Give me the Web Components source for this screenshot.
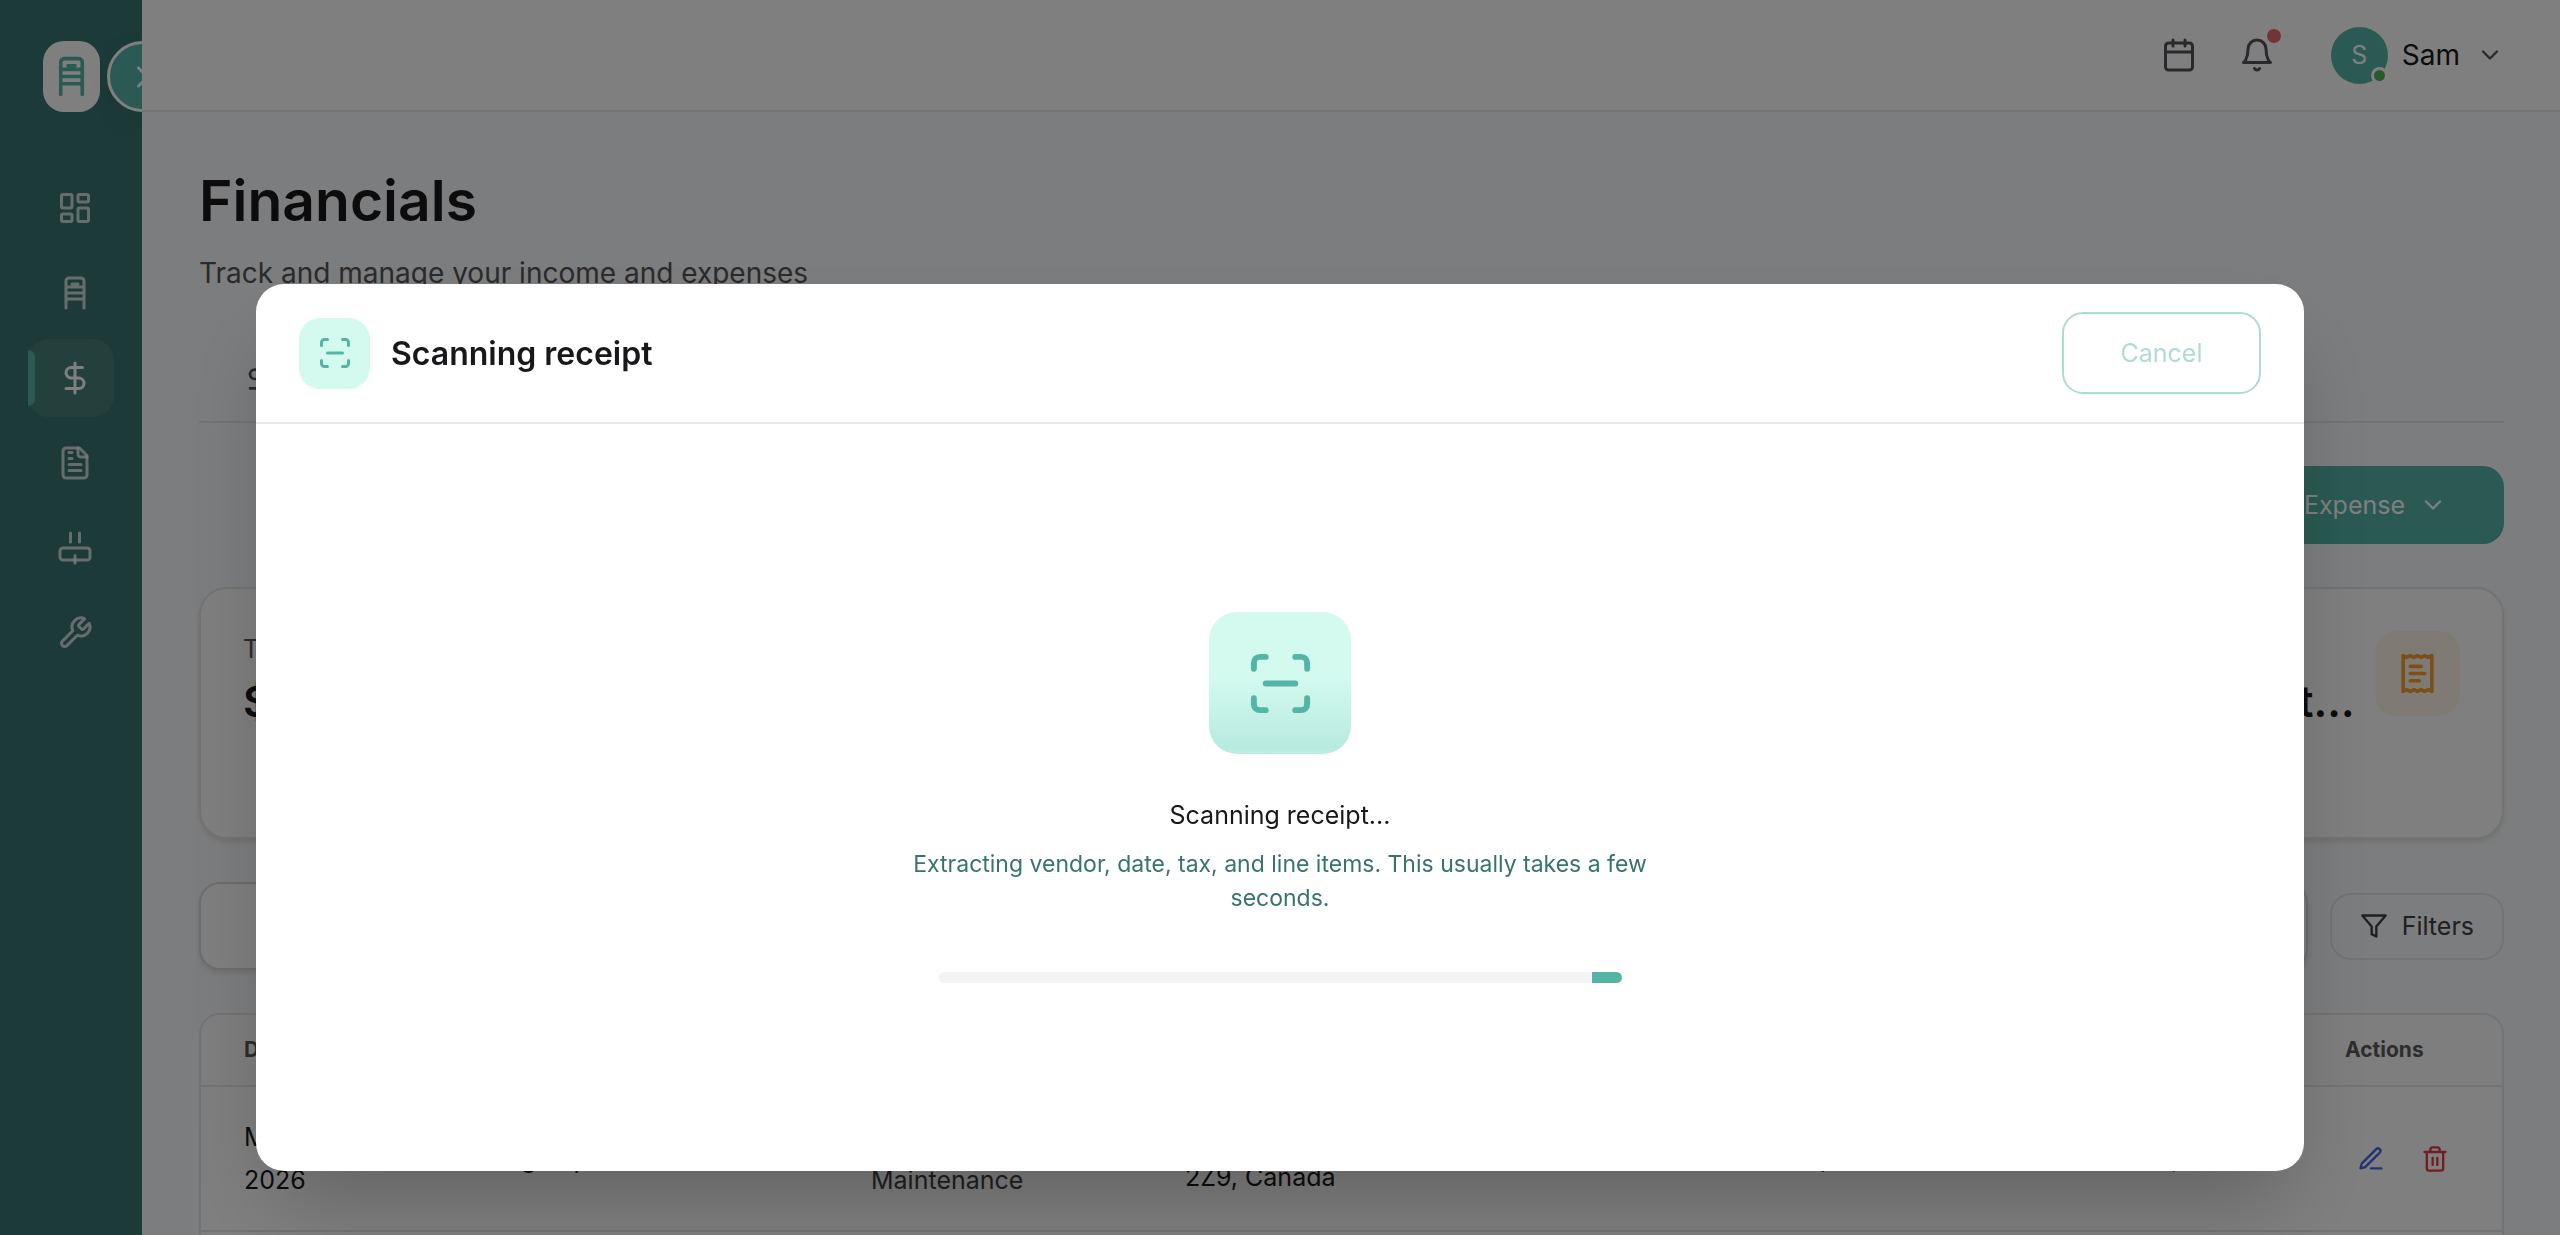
<!DOCTYPE html>
<html lang="en">
<head>
<meta charset="utf-8">
<title>Financials</title>
<style>
    html, body {
        margin: 0;
        height: 100%;
        overflow: hidden;
    }
    body {
        --teal: #54b5a6;
        --teal-dark: #38746e;
        --mint: #d4faf0;
        --line: #e5e7eb;
        --ink: #18181b;
        --muted: #555555;
        font-family: Inter, "Liberation Sans", sans-serif;
        font-size: 25px;
        line-height: 36px;
        color: var(--ink);
        background: #f9fafc;
    }
</style>
</head>
<body>
<finance-app></finance-app>
<scan-dialog heading="Scanning receipt">
    <span slot="status">Scanning receipt...</span>
    <span slot="hint">Extracting vendor, date, tax, and line items. This usually takes a few seconds.</span>
</scan-dialog>

<script>
(function () {
    const ICONS = {
        ladder: '<path d="M6 22V4a2 2 0 0 1 2-2h8a2 2 0 0 1 2 2v18M6 8h12M6 12h12M6 16h12M10 6h4"/>',
        dashboard: '<rect x="3" y="3" width="7" height="9" rx="1"/><rect x="14" y="3" width="7" height="5" rx="1"/><rect x="14" y="12" width="7" height="9" rx="1"/><rect x="3" y="16" width="7" height="5" rx="1"/>',
        dollar: '<path d="M12 2v20M17 5H9.5a3.5 3.5 0 0 0 0 7h5a3.5 3.5 0 0 1 0 7H6"/>',
        file: '<path d="M15 2H6a2 2 0 0 0-2 2v16a2 2 0 0 0 2 2h12a2 2 0 0 0 2-2V7Z"/><path d="M14 2v4a2 2 0 0 0 2 2h4M10 5H8M10 9H8M16 13H8M16 17H8"/>',
        appliance: '<rect x="2" y="12" width="20" height="8" rx="2"/><path d="M9 2v6M15 2v6M12 17v5"/>',
        wrench: '<path d="M14.7 6.3a1 1 0 0 0 0 1.4l1.6 1.6a1 1 0 0 0 1.4 0l3.77-3.77a6 6 0 0 1-7.94 7.94l-6.91 6.91a2.12 2.12 0 0 1-3-3l6.91-6.91a6 6 0 0 1 7.94-7.94l-3.76 3.76z"/>',
        right: '<path d="m9 18 6-6-6-6"/>',
        down: '<path d="m6 9 6 6 6-6"/>',
        calendar: '<rect x="3" y="4" width="18" height="18" rx="2"/><path d="M8 2v4M16 2v4M3 10h18"/>',
        bell: '<path d="M6 8a6 6 0 0 1 12 0c0 7 3 9 3 9H3s3-2 3-9M10.3 21a1.94 1.94 0 0 0 3.4 0"/>',
        receipt: '<path d="M4 2v20l2-1 2 1 2-1 2 1 2-1 2 1 2-1 2 1V2l-2 1-2-1-2 1-2-1-2 1-2-1-2 1Z"/><path d="M14 8H8M16 12H8M13 16H8"/>',
        filter: '<path d="M22 3H2l8 9.46V19l4 2v-8.54L22 3z"/>',
        pen: '<path d="M12 20h9M16.5 3.5a2.12 2.12 0 0 1 3 3L7 19l-4 1 1-4Z"/>',
        trash: '<path d="M3 6h18M19 6v14a2 2 0 0 1-2 2H7a2 2 0 0 1-2-2V6M8 6V4a2 2 0 0 1 2-2h4a2 2 0 0 1 2 2v2M10 11v6M14 11v6"/>',
        scan: '<path d="M3 7V5a2 2 0 0 1 2-2h2M17 3h2a2 2 0 0 1 2 2v2M21 17v2a2 2 0 0 1-2 2h-2M7 21H5a2 2 0 0 1-2-2v-2M7 12h10"/>'
    };

    // registers an element whose shadow root is filled from a template
    function define(name, render) {
        customElements.define(name, class extends HTMLElement {
            constructor() {
                super();
                this._shadowRoot = this.attachShadow({ mode: "open" });
            }
            connectedCallback() {
                const template = document.createElement("template");
                template.innerHTML = render(this);
                this._shadowRoot.replaceChildren(template.content.cloneNode(true));
            }
        });
    }

    define("ui-icon", (el) => {
        const size = el.getAttribute("size") || 36;
        return `
        <style>
            :host { display: block; flex: none; width: ${size}px; height: ${size}px; }
            svg { display: block; }
        </style>
        <svg width="${size}" height="${size}" viewBox="0 0 24 24" fill="none" stroke="currentColor"
            stroke-width="2" stroke-linecap="round" stroke-linejoin="round"
            aria-hidden="true">${ICONS[el.getAttribute("name")]}</svg>
        `;
    });

    define("nav-item", (el) => `
        <style>
            :host { display: block; }
            a {
                display: flex;
                align-items: center;
                justify-content: center;
                position: relative;
                height: 78px;
                padding-left: 7px;
                border-radius: 21px;
                color: rgba(255, 255, 255, 0.75);
            }
            :host([active]) a {
                color: #fff;
                background: rgba(255, 255, 255, 0.09);
            }
            :host([active]) a::before {
                content: "";
                position: absolute;
                left: 0;
                top: 11px;
                bottom: 11px;
                width: 7px;
                border-radius: 0 7px 7px 0;
                background: var(--teal);
            }
        </style>
        <a href="#" aria-label="${el.getAttribute("label")}"><ui-icon name="${el.getAttribute("icon")}"></ui-icon></a>
    `);

    define("side-bar", () => `
        <style>
            :host {
                display: block;
                box-sizing: border-box;
                position: relative;
                overflow: hidden;
                padding: 41px 28px 0;
                background: var(--teal-dark);
            }
            .logo {
                display: flex;
                align-items: center;
                justify-content: center;
                width: 57px;
                height: 71px;
                margin: 0 0 57px 15px;
                border-radius: 21px;
                color: var(--teal);
                background: #fff;
            }
            button {
                position: absolute;
                top: 41px;
                right: -36px;
                display: flex;
                align-items: center;
                justify-content: center;
                box-sizing: border-box;
                width: 71px;
                height: 71px;
                padding: 0;
                border: 3px solid #fff;
                border-radius: 50%;
                color: #fff;
                background: var(--teal);
                box-shadow: 0 7px 28px rgba(0, 0, 0, 0.06);
            }
            nav {
                display: grid;
                gap: 7px;
            }
        </style>
        <div class="logo"><ui-icon name="ladder" size="43"></ui-icon></div>
        <button aria-label="Expand sidebar"><ui-icon name="right"></ui-icon></button>
        <nav>
            <nav-item icon="dashboard" label="Dashboard"></nav-item>
            <nav-item icon="ladder" label="Properties"></nav-item>
            <nav-item icon="dollar" label="Financials" active></nav-item>
            <nav-item icon="file" label="Documents"></nav-item>
            <nav-item icon="appliance" label="Appliances"></nav-item>
            <nav-item icon="wrench" label="Maintenance"></nav-item>
        </nav>
    `);

    define("top-bar", () => `
        <style>
            :host {
                display: flex;
                align-items: center;
                justify-content: flex-end;
                height: 110px;
                padding-right: 56px;
                border-bottom: 2px solid var(--line);
                background: #fff;
            }
            button {
                display: flex;
                align-items: center;
                position: relative;
                padding: 0;
                border: 0;
                background: none;
                font: inherit;
                color: #52525b;
            }
            .calendar { margin-right: 42px; }
            .bell { margin-right: 56px; }
            .badge {
                position: absolute;
                right: -6px;
                top: -8px;
                width: 14px;
                height: 14px;
                border-radius: 50%;
                background: #e06c6c;
            }
            .avatar {
                position: relative;
                width: 57px;
                line-height: 57px;
                border-radius: 50%;
                text-align: center;
                color: #fff;
                background: var(--teal);
            }
            .online {
                position: absolute;
                right: 0;
                bottom: 0;
                width: 11px;
                height: 11px;
                border: 3px solid #fff;
                border-radius: 50%;
                background: #52b455;
            }
            .name {
                margin: 0 16px 0 14px;
                font-size: 28px;
                color: var(--ink);
            }
        </style>
        <button class="calendar" aria-label="Calendar"><ui-icon name="calendar"></ui-icon></button>
        <button class="bell" aria-label="Notifications"><ui-icon name="bell"></ui-icon><span class="badge"></span></button>
        <button>
            <span class="avatar">S<span class="online"></span></span>
            <span class="name">Sam</span>
            <ui-icon name="down" size="28"></ui-icon>
        </button>
    `);

    define("page-heading", () => `
        <style>
            :host { display: block; }
            h1 {
                margin: 0 0 18px;
                font-size: 57px;
                line-height: 66px;
                font-weight: 600;
            }
            p {
                margin: 0;
                font-size: 28px;
                line-height: 42px;
                color: var(--muted);
            }
        </style>
        <h1><slot></slot></h1>
        <p><slot name="sub"></slot></p>
    `);

    define("stat-card", (el) => `
        <style>
            :host {
                display: flex;
                gap: 14px;
                box-sizing: border-box;
                min-width: 0;
                min-height: 252px;
                padding: 42px;
                border: 2px solid #e7e7e4;
                border-radius: 28px;
                background: #fff;
                box-shadow: 0 3px 5px rgba(0, 0, 0, 0.1);
            }
            .text {
                flex: 1;
                min-width: 0;
            }
            .label { color: var(--muted); }
            .value {
                margin-top: 7px;
                overflow: hidden;
                text-overflow: ellipsis;
                white-space: nowrap;
                font-size: 43px;
                line-height: 54px;
                font-weight: 600;
            }
            .icon {
                display: flex;
                align-items: center;
                justify-content: center;
                flex: none;
                width: 85px;
                height: 85px;
                border-radius: 21px;
                color: #f5a030;
                background: #fef4e8;
            }
        </style>
        <div class="text">
            <div class="label">${el.getAttribute("label")}</div>
            <div class="value"><slot></slot></div>
        </div>
        <div class="icon"><ui-icon name="${el.getAttribute("icon")}" size="43"></ui-icon></div>
    `);

    define("filter-bar", () => `
        <style>
            :host {
                display: flex;
                align-items: center;
                gap: 22px;
            }
            input {
                flex: 1;
                min-width: 0;
                height: 88px;
                box-sizing: border-box;
                padding: 0 85px;
                border: 2px solid #d9dbe0;
                border-radius: 21px;
                font: inherit;
                background: #fff;
                box-shadow: 0 3px 5px rgba(0, 0, 0, 0.1);
            }
            button {
                display: flex;
                align-items: center;
                gap: 14px;
                height: 67px;
                padding: 0 28px;
                border: 2px solid var(--line);
                border-radius: 21px;
                font: inherit;
                color: #3f3f46;
                background: none;
            }
        </style>
        <input type="search" aria-label="Search expenses" placeholder="Search expenses">
        <button><ui-icon name="filter" size="28"></ui-icon>Filters</button>
    `);

    define("expense-table", () => `
        <style>
            :host {
                display: block;
                border: 2px solid var(--line);
                border-radius: 21px;
                overflow: hidden;
                background: #fff;
            }
            table {
                width: 100%;
                table-layout: fixed;
                border-spacing: 0;
            }
            th, td {
                box-sizing: border-box;
                padding: 0 0 0 43px;
                text-align: left;
                border-bottom: 2px solid var(--line);
            }
            th {
                height: 72px;
                font-size: 21px;
                font-weight: 700;
                color: #5a5a5a;
                background: #fcfcfc;
            }
            td { height: 145px; }
            .date, .category { line-height: 43px; }
            .category { color: #3f3f46; }
            .total { color: #dc3c3c; }
            .actions {
                display: flex;
                gap: 36px;
                padding-left: 12px;
            }
            button {
                padding: 0;
                border: 0;
                background: none;
                color: #4169e1;
            }
            .delete { color: #dc3c3c; }
            .c1 { width: 182px; }
            .c2 { width: 445px; }
            .c3 { width: 314px; }
            .c4 { width: 330px; }
            .c6 { width: 173px; }
            .c7 { width: 178px; }
            .c8 { width: 200px; }
        </style>
        <table>
            <colgroup><col class="c1"><col class="c2"><col class="c3"><col class="c4"><col><col class="c6"><col class="c7"><col class="c8"><col class="c8"></colgroup>
            <thead>
                <tr><th>Date</th><th>Description</th><th>Category</th><th>Property</th><th>Vendor</th><th>Amount</th><th>Tax</th><th>Total</th><th>Actions</th></tr>
            </thead>
            <tbody>
                <tr>
                    <td class="date">Mar 12,<br>2026</td>
                    <td>Plumbing Repair</td>
                    <td class="category">Repairs &amp;<br>Maintenance</td>
                    <td>Toronto, ON M5V<br>2Z9, Canada</td>
                    <td></td>
                    <td>$1,250.00</td>
                    <td>$162.50</td>
                    <td class="total">$1,412.50</td>
                    <td><div class="actions">
                        <button aria-label="Edit"><ui-icon name="pen" size="28"></ui-icon></button>
                        <button class="delete" aria-label="Delete"><ui-icon name="trash" size="28"></ui-icon></button>
                    </div></td>
                </tr>
                <tr><td colspan="9"></td></tr>
            </tbody>
        </table>
    `);

    define("finance-app", () => `
        <style>
            :host {
                display: grid;
                grid-template-columns: 142px minmax(0, 1fr);
                height: 100vh;
                overflow: hidden;
            }
            main {
                display: flex;
                flex-direction: column;
                gap: 43px;
                padding: 56px 56px 56px 57px;
            }
            .tabs {
                display: flex;
                padding-left: 43px;
                border-bottom: 2px solid #e7e7e4;
            }
            .tabs a {
                display: flex;
                align-items: center;
                gap: 14px;
                height: 84px;
                color: #52525b;
                text-decoration: none;
            }
            .add {
                display: flex;
                align-items: center;
                align-self: flex-end;
                gap: 14px;
                height: 78px;
                padding: 0 57px;
                border: 0;
                border-radius: 21px;
                font: inherit;
                color: #fff;
                background: var(--teal);
            }
            .cards {
                display: grid;
                grid-template-columns: repeat(4, minmax(0, 1fr));
                gap: 43px;
            }
        </style>
        <side-bar></side-bar>
        <div>
            <top-bar></top-bar>
            <main>
                <page-heading>Financials<span slot="sub">Track and manage your income and expenses</span></page-heading>
                <div class="tabs"><a href="#"><ui-icon name="dollar" size="32"></ui-icon>Expenses</a></div>
                <button class="add">Add Expense<ui-icon name="down" size="28"></ui-icon></button>
                <div class="cards">
                    <stat-card label="Total Expenses" icon="dollar">$1,412.50</stat-card>
                    <stat-card label="This Month" icon="calendar">$1,412.50</stat-card>
                    <stat-card label="Documents" icon="file">1</stat-card>
                    <stat-card label="Top Category" icon="receipt">Repair &amp; Investment</stat-card>
                </div>
                <filter-bar></filter-bar>
                <expense-table></expense-table>
            </main>
        </div>
    `);

    define("scan-dialog", (el) => `
        <style>
            :host {
                display: block;
                position: fixed;
                inset: 0;
                background: rgba(0, 0, 0, 0.5);
            }
            section {
                width: 80%;
                margin: 284px auto 0;
                border-radius: 28px;
                background: #fff;
                box-shadow: 0 44px 89px -21px rgba(0, 0, 0, 0.25);
            }
            header {
                display: flex;
                align-items: center;
                gap: 21px;
                padding: 28px 43px;
                border-bottom: 2px solid #e6e7ee;
            }
            .tile {
                display: flex;
                align-items: center;
                justify-content: center;
                width: 71px;
                height: 71px;
                border-radius: 21px;
                color: var(--teal);
                background: var(--mint);
            }
            h2 {
                flex: 1;
                margin: 0;
                font-size: 32px;
                line-height: 43px;
                font-weight: 600;
            }
            button {
                width: 199px;
                height: 82px;
                border: 2px solid var(--teal);
                border-radius: 21px;
                font: inherit;
                color: var(--teal);
                background: none;
                opacity: 0.47;
            }
            .body {
                display: flex;
                flex-direction: column;
                align-items: center;
                justify-content: center;
                padding: 188px 43px;
                text-align: center;
            }
            .large {
                width: 142px;
                height: 142px;
                margin-bottom: 43px;
                border-radius: 28px;
                background: linear-gradient(transparent 45%, rgba(84, 181, 166, 0.22) 95%, rgba(84, 181, 166, 0.18)) var(--mint);
            }
            p { margin: 0; }
            .hint {
                max-width: 746px;
                margin: 14px 0 57px;
                font-size: 23px;
                line-height: 34px;
                color: var(--teal-dark);
            }
            .track {
                display: flex;
                justify-content: flex-end;
                width: 683px;
                max-width: 100%;
                height: 11px;
                border-radius: 6px;
                overflow: hidden;
                background: #f3f4f6;
            }
            .track span {
                width: 30px;
                background: var(--teal);
            }
        </style>
        <section role="dialog" aria-modal="true" aria-labelledby="title">
            <header>
                <div class="tile"><ui-icon name="scan"></ui-icon></div>
                <h2 id="title">${el.getAttribute("heading")}</h2>
                <button disabled>Cancel</button>
            </header>
            <div class="body">
                <div class="tile large"><ui-icon name="scan" size="71"></ui-icon></div>
                <p><slot name="status"></slot></p>
                <p class="hint"><slot name="hint"></slot></p>
                <div class="track" role="progressbar" aria-label="Scanning"><span></span></div>
            </div>
        </section>
    `);
})();
</script>
</body>
</html>
